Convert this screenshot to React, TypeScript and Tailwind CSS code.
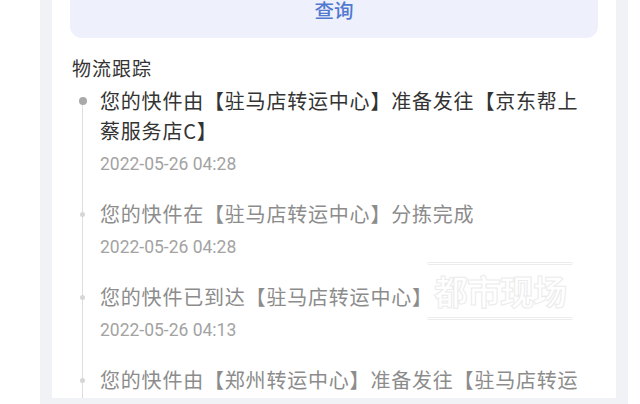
import React from "react";

interface Track {
  text: string;
  time: string;
  latest?: boolean;
}

const tracks: Track[] = [
  {
    text: "您的快件由【驻马店转运中心】准备发往【京东帮上蔡服务店C】",
    time: "2022-05-26 04:28",
    latest: true,
  },
  { text: "您的快件在【驻马店转运中心】分拣完成", time: "2022-05-26 04:28" },
  { text: "您的快件已到达【驻马店转运中心】", time: "2022-05-26 04:13" },
  {
    text: "您的快件由【郑州转运中心】准备发往【驻马店转运中心】",
    time: "2022-05-26 02:10",
  },
];

function TrackItem({ item, first }: { item: Track; first: boolean }) {
  return (
    <div className="flex">
      <div className="relative w-[28px] shrink-0">
        <div
          className={`absolute left-[10px] top-0 bottom-0 w-px bg-[#dedede] ${first ? "top-[18px]" : ""}`}
        />
        {item.latest ? (
          <div className="absolute left-[7px] top-[11px] w-[8px] h-[8px] rounded-full bg-[#a9a9a9]" />
        ) : (
          <div className="absolute left-[8px] top-[13px] w-[5px] h-[5px] rounded-full bg-[#d6d6d6]" />
        )}
      </div>
      <div className="flex-1 pb-[23px] pr-[14px]">
        <div
          className={`text-[20px] tracking-[0.8px] leading-[30px] ${item.latest ? "text-[#333333]" : "text-[#8c8c8c]"}`}
        >
          {item.text}
        </div>
        <div className="mt-[6px] text-[17.5px] leading-[24px] text-[#a3a3a3] font-['Roboto',sans-serif]">
          {item.time}
        </div>
      </div>
    </div>
  );
}

export default function App() {
  return (
    <div className="w-[640px] h-[404px] bg-white overflow-hidden font-['Noto_Sans_CJK_SC','Noto_Sans',sans-serif]">
      <div className="ml-[40px] w-[588px] h-[404px] bg-[#f1f2f6] px-[12px]">
        <div className="relative h-[398px] bg-white overflow-hidden px-[18px]">
          <button className="mt-[-18px] w-full h-[56px] rounded-[12px] bg-[#eef0fc] text-[#5179d0] text-[19.5px] font-medium flex items-center justify-center">
            查询
          </button>
          <div className="mt-[18px] ml-[2px] text-[19px] tracking-[1px] leading-[24px] text-[#333333]">
            物流跟踪
          </div>
          <div className="mt-[6px] ml-[2px]">
            {tracks.map((t, i) => (
              <TrackItem key={i} item={t} first={i === 0} />
            ))}
          </div>

          <div className="absolute left-[373px] top-[262px] w-[150px] h-[58px] bg-white/85 flex flex-col items-center justify-between">
            <div className="w-[146px] h-[3px] rounded-full border border-[#ececec]" />
            <div className="text-[34px] leading-[40px] font-bold text-white [-webkit-text-stroke:1px_#ebebeb] tracking-[-1px]">
              都市现场
            </div>
            <div className="w-[146px] h-[3px] rounded-full border border-[#ececec]" />
          </div>
        </div>
      </div>
    </div>
  );
}
